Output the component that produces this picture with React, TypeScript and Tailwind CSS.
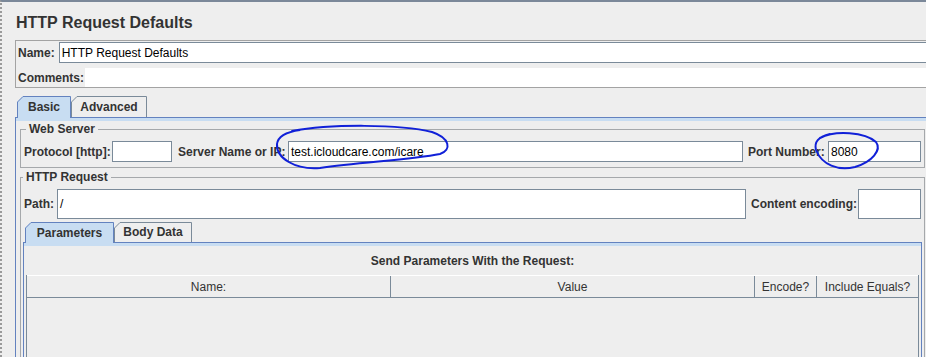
import React from 'react'

type TabProps = {
  label: string
  w: number
  h: number
  selected?: boolean
  className: string
}

function Tab({ label, w, h, selected, className }: TabProps) {
  const stroke = selected ? '#6382bf' : '#7a8a99'
  const fill = selected ? '#c8ddf2' : '#eeeeee'
  return (
    <div className={`relative flex items-center justify-center font-bold text-[#333333] ${selected ? 'z-10' : ''} ${className}`}>
      <svg className="absolute inset-0" width={w} height={h} viewBox={`0 0 ${w} ${h}`}>
        <path d={`M0 ${h} L0 6 L6 0 L${w} 0 L${w} ${h} Z`} fill={fill} />
        <polyline
          points={`0.5,${h} 0.5,6 6,0.5 ${w - 0.5},0.5 ${w - 0.5},${h}`}
          fill="none"
          stroke={stroke}
          strokeWidth={1}
        />
      </svg>
      <span className="relative">{label}</span>
    </div>
  )
}

function Field({ className, value }: { className: string; value?: string }) {
  return (
    <div className={`flex items-center bg-white border border-[#7a8a99] pl-[2px] text-black font-normal ${className}`}>
      {value}
    </div>
  )
}

export default function App() {
  return (
    <div className="relative w-[926px] h-[357px] overflow-hidden bg-[#eeeeee] border-t-2 border-t-[#7b8899] border-l-2 border-l-[#9a9a9a] border-dotted [border-top-style:solid] font-['Liberation_Sans',Arial,sans-serif] text-[12px] leading-[14px] text-[#333333]">
      {/* title */}
      <div className="h-[38px] flex items-center pl-[14px] pt-[3px] text-[16px] font-bold leading-[18px]">
        HTTP Request Defaults
      </div>

      {/* name / comments */}
      <div className="ml-[13px] w-[930px] border border-[#a3a3a3] pt-[1px]">
        <div className="flex items-center h-[21px] pl-[2px] gap-[4px]">
          <span className="font-bold">Name:</span>
          <Field className="flex-1 h-[21px]" value="HTTP Request Defaults" />
        </div>
        <div className="flex items-center h-[19px] mt-[5px] pl-[2px] gap-[1px]">
          <span className="font-bold">Comments:</span>
          <div className="flex-1 h-[19px] bg-white" />
        </div>
      </div>

      {/* top tabs */}
      <div className="mt-[8px] ml-[15px] flex items-start h-[22px] -mb-[1px]">
        <Tab label="Basic" w={54} h={22} selected className="w-[54px] h-[22px]" />
        <Tab label="Advanced" w={76} h={21} className="w-[76px] h-[21px]" />
      </div>

      <div className="ml-[13px] w-[930px] h-[260px] border-t border-l border-[#6382bf]">
        <div className="h-[3px] bg-[#c8ddf2]" />

        {/* web server */}
        <fieldset className="mt-[1px] ml-[4px] w-[905px] border border-[#a5a8ab] pl-[3px] pt-[5px] pb-[5px]">
          <legend className="ml-[2px] px-[3px] font-bold leading-[14px]">Web Server</legend>
          <div className="flex items-center h-[21px] font-bold">
            <span className="w-[88px] shrink-0">Protocol [http]:</span>
            <Field className="w-[60px] h-[21px] shrink-0" />
            <span className="w-[116px] pl-[6px] shrink-0 whitespace-nowrap">Server Name or IP:</span>
            <Field className="w-[455px] h-[21px] shrink-0" value="test.icloudcare.com/icare" />
            <span className="w-[85px] pl-[5px] shrink-0 whitespace-nowrap">Port Number:</span>
            <Field className="w-[93px] h-[21px] shrink-0" value="8080" />
          </div>
        </fieldset>

        {/* http request */}
        <fieldset className="mt-[2px] ml-[4px] w-[905px] h-[300px] border border-[#a5a8ab] pt-[5px]">
          <legend className="ml-[2px] px-[3px] font-bold leading-[14px]">HTTP Request</legend>
          <div className="flex items-center h-[30px] pl-[3px] font-bold">
            <span className="w-[33px] shrink-0">Path:</span>
            <Field className="w-[689px] h-[30px] shrink-0" value="/" />
            <span className="w-[112px] pl-[5px] shrink-0 whitespace-nowrap">Content encoding:</span>
            <Field className="w-[63px] h-[30px] shrink-0" />
          </div>

          {/* inner tabs */}
          <div className="mt-[3px] ml-[4px] flex items-start h-[21px] -mb-[1px]">
            <Tab label="Parameters" w={89} h={21} selected className="w-[89px] h-[21px]" />
            <Tab label="Body Data" w={78} h={20} className="w-[78px] h-[20px]" />
          </div>
          <div className="ml-[2px] w-[899px] h-[200px] border-t border-l border-r border-[#6382bf]">
            <div className="h-[3px] bg-[#c8ddf2]" />
            <div className="h-[29px] flex items-center justify-center font-bold">
              Send Parameters With the Request:
            </div>
            <div className="ml-[2px] w-[893px] h-[150px] border-l border-r border-[#7a8a99]">
              <div className="flex h-[23px] border-t border-t-white border-b border-b-[#7a8a99] font-normal">
                <div className="w-[364px] flex items-center justify-center border-r border-[#7a8a99]">Name:</div>
                <div className="w-[364px] flex items-center justify-center border-r border-[#7a8a99]">Value</div>
                <div className="w-[62px] flex items-center justify-center border-r border-[#7a8a99]">Encode?</div>
                <div className="flex-1 flex items-center justify-center">Include Equals?</div>
              </div>
            </div>
          </div>
        </fieldset>
      </div>

      {/* hand-drawn highlight marks */}
      <svg className="absolute left-[-2px] top-[-2px] pointer-events-none" width={926} height={357} viewBox="0 0 926 357">
        <path
          d="M292 131 C330 124, 400 124, 432 132 C450 138, 452 150, 440 154 C410 160, 360 162, 320 168 C295 170, 276 158, 277 144 C278 136, 286 132, 300 130"
          fill="none"
          stroke="#1020d8"
          strokeWidth={2}
          strokeLinecap="round"
        />
        <path
          d="M820 138 C835 130, 865 132, 876 142 C882 150, 872 162, 855 167 C838 171, 822 165, 816 150 C814 142, 818 137, 830 134"
          fill="none"
          stroke="#1020d8"
          strokeWidth={2}
          strokeLinecap="round"
        />
      </svg>
    </div>
  )
}
